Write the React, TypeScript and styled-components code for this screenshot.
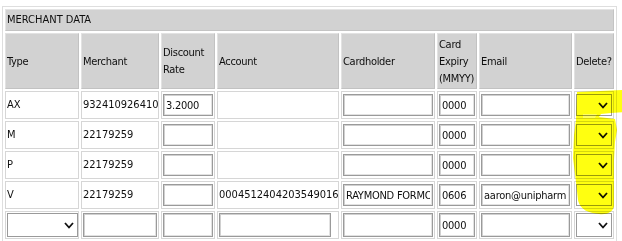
import React from 'react';
import styled, { createGlobalStyle } from 'styled-components';

const GlobalStyle = createGlobalStyle`
  html, body {
    margin: 0;
    padding: 0;
    background: #ffffff;
  }
  body {
    font-family: "DejaVu Sans Condensed", "DejaVu Sans", sans-serif;
    font-stretch: condensed;
    font-size: 11px;
    color: #0e0e0e;
  }
`;

type Row = {
  type: string;
  merchant: string;
  discount: string;
  account: string;
  cardholder: string;
  expiry: string;
  email: string;
};

const rows: Row[] = [
  { type: 'AX', merchant: '932410926410', discount: '3.2000', account: '', cardholder: '', expiry: '0000', email: '' },
  { type: 'M', merchant: '22179259', discount: '', account: '', cardholder: '', expiry: '0000', email: '' },
  { type: 'P', merchant: '22179259', discount: '', account: '', cardholder: '', expiry: '0000', email: '' },
  { type: 'V', merchant: '22179259', discount: '', account: '0004512404203549016', cardholder: 'RAYMOND FORMOSA', expiry: '0606', email: 'aaron@unipharm.com' },
];

const columns = [
  { label: 'Type', w: 74 },
  { label: 'Merchant', w: 78 },
  { label: 'Discount Rate', w: 54 },
  { label: 'Account', w: 122 },
  { label: 'Cardholder', w: 94 },
  { label: 'Card Expiry (MMYY)', w: 40 },
  { label: 'Email', w: 93 },
  { label: 'Delete?', w: 40 },
];

export default function App() {
  return (
    <Page>
      <GlobalStyle />
      <Frame>
        <Table>
          <colgroup>
            {columns.map((c) => (
              <col key={c.label} style={{ width: c.w }} />
            ))}
          </colgroup>
          <tbody>
            <tr>
              <TitleCell colSpan={8}>MERCHANT DATA</TitleCell>
            </tr>
            <tr>
              {columns.map((c) => (
                <HeadCell key={c.label}>{c.label}</HeadCell>
              ))}
            </tr>
            {rows.map((r) => (
              <tr key={r.type}>
                <Cell>{r.type}</Cell>
                <Cell>{r.merchant}</Cell>
                <Cell>
                  <TextInput defaultValue={r.discount} />
                </Cell>
                <Cell>{r.account}</Cell>
                <Cell>
                  <TextInput defaultValue={r.cardholder} />
                </Cell>
                <Cell>
                  <TextInput defaultValue={r.expiry} />
                </Cell>
                <Cell>
                  <TextInput defaultValue={r.email} />
                </Cell>
                <Cell>
                  <DropDown $w={36} />
                </Cell>
              </tr>
            ))}
            <tr>
              <Cell>
                <DropDown $w={71} $h={24} />
              </Cell>
              <Cell>
                <TextInput $h={24} />
              </Cell>
              <Cell>
                <TextInput $h={24} />
              </Cell>
              <Cell>
                <TextInput $h={24} $w={112} />
              </Cell>
              <Cell>
                <TextInput $h={24} />
              </Cell>
              <Cell>
                <TextInput $h={24} defaultValue="0000" />
              </Cell>
              <Cell>
                <TextInput $h={24} />
              </Cell>
              <Cell>
                <DropDown $w={36} $h={24} />
              </Cell>
            </tr>
          </tbody>
        </Table>
        {/* highlighter marks drawn over the Delete? column */}
        <Highlight viewBox="0 0 60 132" width="60" height="132">
          <path
            d="M6 2 L53 0 L53 22 L40 23 L30 24 L28 27 L36 28 L44 29 L46 40 L44 52 L43 70 L43 116 C42 122 36 125 28 124 C18 123 9 120 7 110 L5 92 L2 68 L3 45 L5 30 L6 2 Z"
            fill="#ffff10"
          />
          <path d="M12 24 L26 24 L24 28 L12 28 Z" fill="#ffff60" />
        </Highlight>
      </Frame>
    </Page>
  );
}

function DropDown({ $w, $h = 22 }: { $w: number; $h?: number }) {
  return (
    <SelectWrap $w={$w} $h={$h}>
      <SelectBox defaultValue="">
        <option value=""></option>
        <option value="Y">Y</option>
      </SelectBox>
      <Chevron viewBox="0 0 10 7" width="10" height="7">
        <path d="M1 1 L5 5.5 L9 1" fill="none" stroke="#111" strokeWidth="1.8" />
      </Chevron>
    </SelectWrap>
  );
}

const Page = styled.div`
  padding: 6px 0 0 2px;
`;

const Frame = styled.div`
  position: relative;
  width: 620px;
`;

const Table = styled.table`
  table-layout: fixed;
  width: 615px;
  border-collapse: separate;
  border-spacing: 2px;
  border: 1px solid #dedede;
`;

const BaseCell = styled.td`
  box-sizing: border-box;
  padding: 0 1px;
  line-height: 16px;
  vertical-align: middle;
  white-space: nowrap;
  overflow: hidden;
`;

const TitleCell = styled(BaseCell)`
  height: 22px;
  background: #d2d2d2;
  border: 1px solid #e4e4e4;
  border-bottom-color: #c4c4c4;
  border-right-color: #c4c4c4;
`;

const HeadCell = styled(BaseCell).attrs({ as: 'th' })`
  height: 56px;
  padding: 0 0 0 1px;
  font-weight: normal;
  text-align: left;
  letter-spacing: -0.3px;
  line-height: 17px;
  white-space: normal;
  overflow: visible;
  background: #d2d2d2;
  border: 1px solid #e2e2e2;
  border-bottom-color: #c2c2c2;
  border-right-color: #c2c2c2;
`;

const Cell = styled(BaseCell)`
  height: 28px;
  background: #ffffff;
  border: 1px solid #d6d6d6;
`;

const TextInput = styled.input<{ $h?: number; $w?: number }>`
  box-sizing: border-box;
  display: block;
  width: ${(p) => (p.$w ? `${p.$w}px` : '100%')};
  height: ${(p) => p.$h ?? 22}px;
  margin: 0;
  padding: 0 2px;
  font: inherit;
  letter-spacing: -0.25px;
  color: #0e0e0e;
  background: #ffffff;
  border: 1px solid #9a9a9a;
  box-shadow: inset 1px 1px 0 #d0d0d0, inset -1px -1px 0 #e2e2e2;
  outline: none;
`;

const SelectWrap = styled.div<{ $w: number; $h: number }>`
  position: relative;
  width: ${(p) => p.$w}px;
  height: ${(p) => p.$h}px;
  margin-left: auto;
`;

const SelectBox = styled.select`
  box-sizing: border-box;
  appearance: none;
  width: 100%;
  height: 100%;
  margin: 0;
  padding: 0 2px;
  font: inherit;
  background: #ffffff;
  border: 1px solid #9a9a9a;
  border-radius: 0;
  outline: none;
`;

const Chevron = styled.svg`
  position: absolute;
  right: 4px;
  top: 50%;
  margin-top: -3px;
  pointer-events: none;
`;

const Highlight = styled.svg`
  position: absolute;
  left: 569px;
  top: 84px;
  mix-blend-mode: multiply;
  pointer-events: none;
`;
